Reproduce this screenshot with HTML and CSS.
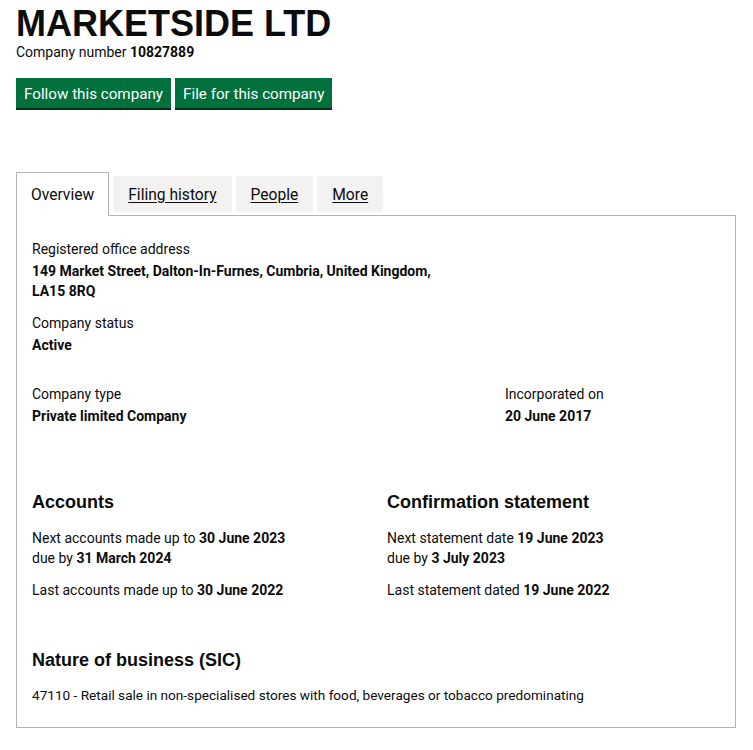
FILE: index.html
```html
<!DOCTYPE html>
<html lang="en">
<head>
<meta charset="utf-8">
<title>MARKETSIDE LTD</title>
<link rel="stylesheet" href="styles.css">
</head>
<body>
<main class="page">
  <h1 class="title">MARKETSIDE LTD</h1>
  <p class="company-number">Company number <strong>10827889</strong></p>
  <div class="actions">
    <a class="button" href="#">Follow this company</a>
    <a class="button" href="#">File for this company</a>
  </div>

  <div class="tabs">
    <ul class="tab-list">
      <li class="tab tab-active">Overview</li>
      <li class="tab"><a href="#">Filing history</a></li>
      <li class="tab"><a href="#">People</a></li>
      <li class="tab"><a href="#">More</a></li>
    </ul>
    <div class="panel">
      <div class="row">
        <div class="col-two-thirds">
          <dl class="field">
            <dt>Registered office address</dt>
            <dd class="address">149 Market Street, Dalton-In-Furnes, Cumbria, United Kingdom, LA15 8RQ</dd>
          </dl>
          <dl class="field field-status">
            <dt>Company status</dt>
            <dd>Active</dd>
          </dl>
        </div>
      </div>
      <div class="row row-type">
        <div class="col-two-thirds">
          <dl class="field">
            <dt>Company type</dt>
            <dd>Private limited Company</dd>
          </dl>
        </div>
        <div class="col-third">
          <dl class="field">
            <dt>Incorporated on</dt>
            <dd>20 June 2017</dd>
          </dl>
        </div>
      </div>
      <div class="row row-half">
        <div class="col-half">
          <h2 class="heading">Accounts</h2>
          <p class="text">Next accounts made up to <strong>30 June 2023</strong><br>due by <strong>31 March 2024</strong></p>
          <p class="text text-last">Last accounts made up to <strong>30 June 2022</strong></p>
        </div>
        <div class="col-half">
          <h2 class="heading">Confirmation statement</h2>
          <p class="text">Next statement date <strong>19 June 2023</strong><br>due by <strong>3 July 2023</strong></p>
          <p class="text text-last">Last statement dated <strong>19 June 2022</strong></p>
        </div>
      </div>
      <h2 class="heading heading-sic">Nature of business (SIC)</h2>
      <p class="sic">47110 - Retail sale in non-specialised stores with food, beverages or tobacco predominating</p>
    </div>
  </div>
</main>
</body>
</html>
```
FILE: styles.css
```css
* { box-sizing: border-box; }
body {
  margin: 0;
  background: #ffffff;
  color: #0b0c0c;
  font-family: Roboto, "Liberation Sans", sans-serif;
}
.page {
  padding: 4px 16px 0;
  width: 753px;
}
.title {
  margin: 0;
  font-family: "Liberation Sans", Arial, sans-serif;
  font-weight: 700;
  font-size: 36px;
  line-height: 39px;
}
.company-number {
  margin: 0;
  font-size: 14px;
  line-height: 19px;
}
.company-number strong { font-weight: 700; }
.actions {
  display: flex;
  gap: 4px;
  margin-top: 16px;
}
.button {
  display: block;
  background: #00703c;
  color: #ffffff;
  text-decoration: none;
  font-size: 15.2px;
  line-height: 20px;
  padding: 6px 8px 4px;
  height: 30px;
  box-shadow: 0 2px 0 #002d18;
}
.tabs { margin-top: 64px; }
.tab-list {
  display: flex;
  align-items: flex-end;
  list-style: none;
  margin: 0;
  padding: 0;
}
.tab {
  background: #f3f2f1;
  font-size: 15.6px;
  line-height: 20px;
  padding: 9px 15px 7px;
  margin: 0 4px 3px 0;
}
.tab a {
  color: #0b0c0c;
  text-decoration: underline;
  text-underline-offset: 2px;
}
.tab-active {
  background: #ffffff;
  border: 1px solid #b1b4b6;
  border-bottom: 0;
  padding: 12px 14px 11px;
  margin-bottom: -1px;
  position: relative;
  z-index: 1;
}
.panel {
  border: 1px solid #b1b4b6;
  padding: 23px 22px 22px 15px;
  width: 720px;
}
.row {
  display: grid;
  grid-template-columns: 443px 207px;
  column-gap: 30px;
}
.row-type { margin-top: 29px; }
.row-half {
  grid-template-columns: 325px 325px;
  margin-top: 64px;
}
.col-half { min-width: 0; }
.field { margin: 0; font-size: 14px; line-height: 20px; }
.field dt { margin: 0; }
.field dd { margin: 2px 0 0; font-weight: 700; }
.field .address { max-width: 415px; }
.field-status { margin-top: 12px; }
.heading {
  margin: 0;
  font-family: "Liberation Sans", Arial, sans-serif;
  font-weight: 700;
  font-size: 18px;
  line-height: 25px;
}
.text {
  margin: 13px 0 0;
  font-size: 14px;
  line-height: 20px;
}
.text-last { margin-top: 12px; }
.text strong { font-weight: 700; }
.heading-sic { margin-top: 48px; }
.sic {
  margin: 12px 0 0;
  font-size: 13.6px;
  line-height: 20px;
}
```
